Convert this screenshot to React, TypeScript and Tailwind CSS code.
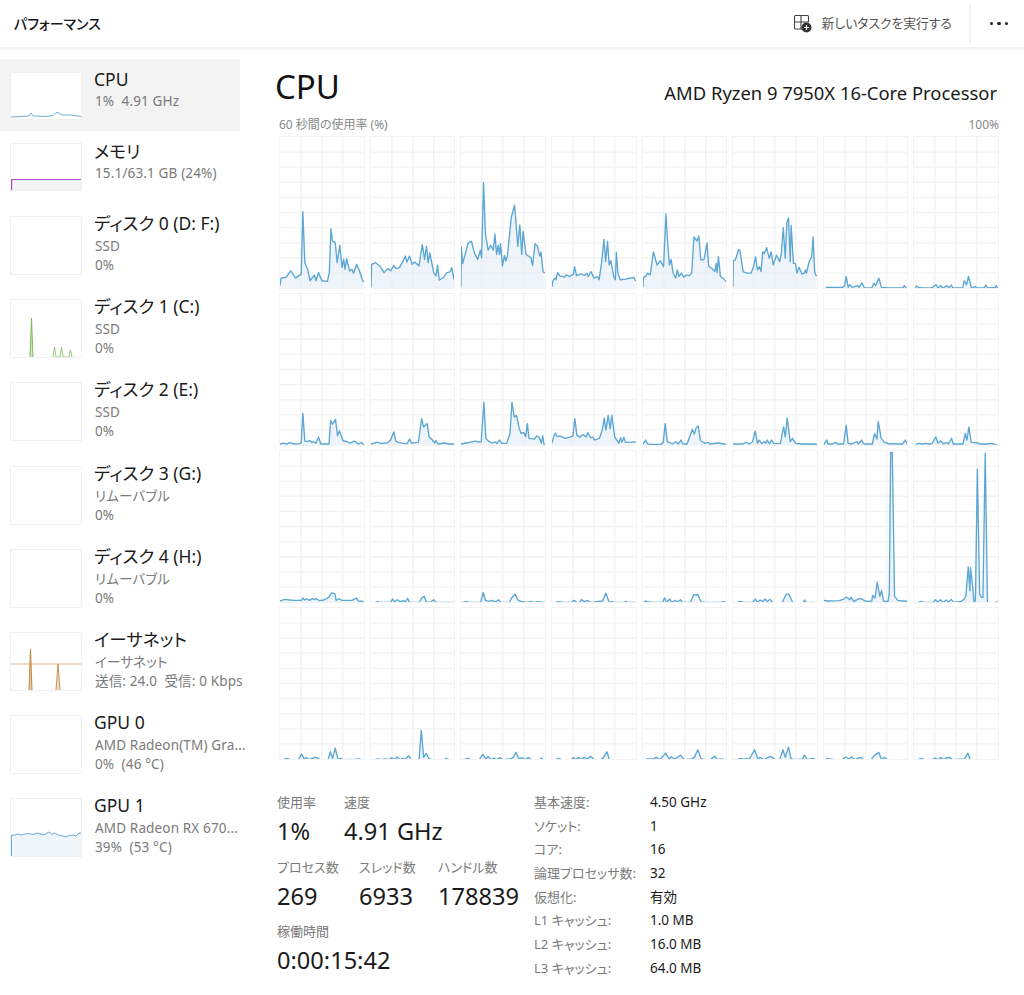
import React from "react";

const cores: string[] = [
  "0,7 3,30 18,32 33,52 48,30 65,43 70,232 76,77 85,55 92,22 105,40 110,22 118,47 128,22 145,20 151,47 156,180 161,142 169,139 175,77 183,130 190,62 195,87 199,57 204,89 213,52 220,57 225,45 235,72 245,47 253,22",
  "0,2 2,72 14,77 27,67 40,47 52,59 60,52 70,69 77,59 87,62 97,80 105,97 110,79 118,97 126,72 134,79 147,67 157,132 164,87 170,127 175,77 180,107 192,47 199,37 204,69 209,24 222,32 232,47 242,49 247,62 254,27",
  "0,2 1,125 5,74 14,107 22,137 32,142 41,107 51,87 59,115 63,92 69,320 75,162 83,115 91,130 99,115 104,164 109,102 114,130 118,102 121,135 127,67 133,99 137,82 142,97 154,215 164,252 174,127 180,192 186,102 190,172 199,102 214,92 219,69 227,135 234,127 241,97 245,109 251,50",
  "0,3 3,23 9,30 12,25 17,47 24,37 39,33 44,40 54,35 66,43 69,65 75,38 89,43 99,38 107,45 111,35 119,50 129,30 139,35 144,25 151,70 159,148 164,80 170,142 175,70 180,83 189,35 194,25 197,108 202,45 209,25 224,27 251,32 254,25",
  "0,3 1,32 8,35 13,45 22,40 32,110 43,70 53,83 63,65 70,225 76,130 81,70 86,87 92,45 100,30 105,55 110,35 117,45 125,33 133,40 141,37 149,45 156,155 165,143 171,158 177,85 187,87 196,137 201,67 210,60 220,50 224,75 227,47 231,95 237,35 245,30 254,20",
  "0,3 1,83 7,85 11,97 17,117 21,115 31,50 43,45 55,45 63,65 69,95 75,55 81,65 86,50 91,110 96,105 103,123 111,90 117,110 123,70 133,100 143,80 148,105 154,183 160,90 165,200 170,213 175,80 178,190 185,75 191,75 196,45 202,63 211,43 218,45 222,55 225,45 233,80 241,95 245,155 250,50 253,40",
  "6,5 56,5 63,10 68,38 74,5 79,13 86,5 103,10 107,5 116,18 124,3 146,3 153,18 158,10 168,33 176,5 201,3 221,3 241,3 246,10 251,3",
  "4,3 7,9 14,5 24,3 44,3 54,3 67,13 74,3 81,10 89,3 101,10 107,3 114,12 119,3 149,3 154,25 161,13 167,38 176,3 187,7 194,3 214,3 220,12 225,3 249,5 252,10 256,3",
  "0,3 10,6 20,3 30,7 45,3 60,4 65,7 70,96 76,12 84,10 92,14 98,7 104,10 110,5 118,24 125,3 150,3 155,75 161,63 170,78 176,28 182,43 193,13 205,10 215,6 228,12 240,3 250,8 254,2",
  "0,3 10,6 20,9 30,5 50,6 60,15 70,40 76,12 85,7 100,5 110,4 118,18 124,6 145,8 155,80 161,55 172,65 178,25 188,15 195,6 198,14 205,3 225,6 240,3 254,3",
  "0,3 15,6 30,9 45,12 55,9 62,10 70,130 76,20 84,12 95,6 105,9 110,5 118,15 125,5 140,5 150,35 156,130 163,85 170,90 178,52 184,35 192,38 198,25 203,65 208,20 225,18 232,28 240,22 246,5 250,28 254,3",
  "0,5 4,22 10,36 16,25 24,28 40,20 55,24 64,28 70,80 76,30 85,24 95,32 105,24 110,38 118,22 125,25 130,15 145,20 155,50 160,82 165,45 172,90 178,50 183,90 192,25 205,5 210,22 214,8 220,24 225,8 240,8 256,10",
  "0,3 8,15 14,3 25,2 55,2 62,8 68,65 74,10 80,8 90,3 100,10 108,3 116,15 122,3 135,3 151,48 157,33 163,53 169,58 176,13 190,5 200,8 205,3 230,6 250,3",
  "0,3 30,3 40,8 50,3 60,10 68,42 75,5 80,15 88,4 95,10 100,5 105,15 112,3 118,15 125,4 145,5 155,55 160,25 166,82 175,10 182,20 192,5 210,3 230,3 254,3",
  "0,2 8,15 12,3 25,3 36,8 42,3 60,3 68,60 74,5 85,3 100,10 105,3 115,15 122,3 148,3 155,35 162,18 166,72 175,20 185,8 200,3 215,4 225,3 240,3 249,15 254,5",
  "5,2 15,5 25,3 35,5 45,3 55,4 67,25 73,5 82,13 90,3 100,8 105,3 115,20 120,3 150,3 157,35 162,15 168,55 175,8 190,7 205,3 225,3 235,5 245,3",
  "0,3 5,5 15,8 30,6 45,5 65,5 70,12 75,6 82,10 90,5 100,10 106,7 112,10 120,4 135,6 150,15 158,28 168,25 172,5 180,10 190,5 205,5 220,5 234,12 240,3 254,2",
  "14,2 20,4 26,2 60,2 66,12 72,4 80,10 88,5 95,5 100,8 105,3 112,14 118,2 148,2 155,15 163,20 170,3 182,2 192,10 198,2 254,2",
  "5,2 15,4 28,2 60,2 68,32 75,8 85,5 95,8 105,3 115,10 122,2 148,2 155,15 165,27 175,8 185,5 200,2 215,4 225,2 235,4 254,2",
  "12,2 20,4 35,2 60,2 68,8 75,2 85,2 90,10 100,4 110,8 115,3 125,2 135,4 155,6 165,30 175,2 185,4 190,2 220,2 225,5 230,2 254,2",
  "4,2 8,6 15,3 30,2 60,2 66,15 72,3 82,12 88,3 100,8 105,3 115,10 120,2 145,2 155,25 168,25 178,3 190,2 240,2 245,4 254,2",
  "13,2 21,5 33,2 61,2 68,12 75,2 83,9 91,4 98,12 105,4 113,11 123,1 151,2 163,27 171,27 183,1 215,1 219,9 225,1 248,2",
  "0,5 11,3 46,4 61,9 69,15 79,7 83,15 91,1 101,7 109,11 119,7 129,2 146,3 149,20 156,12 163,60 171,17 176,35 183,2 196,2 200,27 204,455 209,455 216,17 226,5 241,3 251,3",
  "14,2 21,5 29,2 59,2 66,10 73,3 81,10 89,2 99,9 106,3 114,11 121,2 144,5 154,12 159,22 166,110 171,37 173,107 179,57 184,0 188,7 194,407 201,27 207,17 211,17 218,455 225,0 249,1 255,3",
  "11,2 21,5 32,1 56,1 66,18 74,3 81,8 88,1 101,6 108,8 115,6 122,1 147,1 154,25 161,5 169,36 178,1 186,5 193,1 217,2 224,1 242,3 249,1",
  "14,1 21,3 32,1 43,3 56,1 63,7 71,1 80,9 88,1 98,5 105,1 115,13 123,1 147,2 154,90 161,8 169,20 178,3 189,1 224,1 231,5 238,1",
  "10,1 20,5 31,1 56,1 67,17 76,3 83,11 91,1 101,6 108,1 119,7 129,1 150,3 160,8 168,23 178,3 188,7 196,1 206,7 216,1 241,1 246,5 252,1",
  "10,1 20,5 31,1 59,1 66,8 73,1 80,8 90,1 98,8 108,3 118,11 129,1 150,1 157,7 168,25 176,1",
  "10,3 31,3 40,8 52,1 69,21 80,3 87,10 97,3 105,8 115,15 126,1 150,3 157,8 168,31 178,3 192,1 206,1 220,12 227,1 238,3 248,2",
  "14,2 24,5 34,2 41,5 49,1 66,31 76,3 83,8 94,1 108,8 116,11 129,1 143,1 153,31 160,8 170,39 178,3 192,1 213,3 218,15 227,1 245,5 251,1",
  "6,5 18,3 32,1 56,1 67,9 77,3 84,9 95,1 105,6 113,8 120,1 144,1 155,15 168,23 176,1 186,8 193,1",
  "14,2 22,5 32,1 56,1 64,6 74,1 81,8 91,1 98,6 109,8 118,1 154,3 165,21 172,1",
];

const sunk = new Set([6, 7, 17, 18, 19, 20, 21, 23, 24, 25, 26, 27, 28, 29, 30, 31]);

function Core({ data, index }: { data: string; index: number }) {
  const W = 256;
  const H = 459;
  const drop = sunk.has(index) ? 3 : 0;
  const pts = data.split(" ").map((p) => {
    const [x, v] = p.split(",").map(Number);
    return [x, H - v + drop] as [number, number];
  });
  const last = pts[pts.length - 1];
  if (last[0] < W) pts.push([W, index < 16 ? last[1] + 4 : H + 4]);
  const line = pts.map((p) => p.join(",")).join(" ");
  const area = `${pts[0][0]},${H} ${line} ${W},${H}`;
  const hs = [1, 2, 3, 4, 5, 6, 7, 8, 9];
  const vs = [1, 2, 3];
  return (
    <div className="h-[153px] border border-[#f3f3f3] bg-white">
      <svg viewBox={`0 0 ${W} ${H}`} preserveAspectRatio="none" className="block h-full w-full overflow-hidden">
        {hs.map((i) => (
          <line key={i} x1={0} x2={W} y1={(H * i) / 10} y2={(H * i) / 10} stroke="#f3f3f3" strokeWidth={1.4} vectorEffect="non-scaling-stroke" />
        ))}
        {vs.map((i) => (
          <line key={i} x1={(W * i) / 4} x2={(W * i) / 4} y1={0} y2={H} stroke="#f1f2f3" strokeWidth={1.4} vectorEffect="non-scaling-stroke" />
        ))}
        <polygon points={area} fill="#e4edf6" fillOpacity={0.6} />
        <polyline points={line} fill="none" stroke="#4a9dce" strokeOpacity={0.9} strokeWidth={1.35} strokeLinejoin="round" vectorEffect="non-scaling-stroke" />
      </svg>
    </div>
  );
}

function Thumb({ tall, up, children }: { tall: boolean; up: boolean; children?: React.ReactNode }) {
  return (
    <div className={`w-[72px] shrink-0 border border-[#f0f0f0] bg-white ${up ? "mt-[4px]" : "mt-[5px]"} ${tall ? "h-[59px]" : "h-[48px]"}`}>
      {children}
    </div>
  );
}

const svgCls = "block h-full w-full";

function CpuThumb() {
  const p = "0,44 10,43.5 18,43 20,40 22,43 35,43.5 42,42.5 45,39.5 48,40 51,42 60,42 70,43.5";
  return (
    <svg viewBox="0 0 70 46" className={svgCls}>
      <polyline points={p} fill="none" stroke="#5aa5d2" strokeWidth={0.9} />
    </svg>
  );
}

function MemThumb() {
  return (
    <svg viewBox="0 0 70 46" className={svgCls}>
      <rect x={0} y={35} width={70} height={11} fill="#f3f3f3" />
      <polyline points="0.6,46 0.6,35.5 70,35.5" fill="none" stroke="#a94fd0" strokeWidth={1.2} />
    </svg>
  );
}

function DiskThumb() {
  return (
    <svg viewBox="0 0 70 57" className={svgCls}>
      <polygon points="19,57 20.5,18 22,57" fill="#cfe6bd" />
      <polyline points="19,57 20.5,18 22,57" fill="none" stroke="#72b44f" strokeWidth={0.9} />
      <polyline points="42,57 43.5,47 45,57 49,57 50.5,47 52,57 58,57 59.5,50 61,57" fill="none" stroke="#8cc36e" strokeWidth={0.9} />
    </svg>
  );
}

function NetThumb() {
  return (
    <svg viewBox="0 0 70 57" className={svgCls}>
      <rect x={0} y={30} width={70} height={2} fill="#ecd9c6" />
      <polygon points="18,57 19.5,16 21,57" fill="#eccfae" />
      <polyline points="18,57 19.5,16 21,57" fill="none" stroke="#b8792f" strokeWidth={0.9} />
      <polygon points="45,57 47,31 49,57" fill="#f2dfc9" />
      <polyline points="45,57 47,31 49,57" fill="none" stroke="#c48a45" strokeWidth={0.9} />
    </svg>
  );
}

function GpuThumb() {
  const p =
    "0.5,57 0.5,36 4,36 7,35 10,36 14,35 18,34.5 22,35.5 26,34 30,35 33,36 36,34 38,33 41,35.5 44,34 47,36 52,37 55,38 58,36.5 62,36 65,37 68,34 70,34";
  return (
    <svg viewBox="0 0 70 57" className={svgCls}>
      <polygon points={`${p} 70,57`} fill="#eef5fb" />
      <polyline points={p} fill="none" stroke="#5aa5d2" strokeWidth={0.9} />
    </svg>
  );
}

type Item = { name: string; lines: string[]; thumb?: React.ReactNode; active?: boolean };

const items: Item[] = [
  { name: "CPU", lines: ["1%  4.91 GHz"], thumb: <CpuThumb />, active: true },
  { name: "メモリ", lines: ["15.1/63.1 GB (24%)"], thumb: <MemThumb /> },
  { name: "ディスク 0 (D: F:)", lines: ["SSD", "0%"] },
  { name: "ディスク 1 (C:)", lines: ["SSD", "0%"], thumb: <DiskThumb /> },
  { name: "ディスク 2 (E:)", lines: ["SSD", "0%"] },
  { name: "ディスク 3 (G:)", lines: ["リムーバブル", "0%"] },
  { name: "ディスク 4 (H:)", lines: ["リムーバブル", "0%"] },
  { name: "イーサネット", lines: ["イーサネット", "送信: 24.0  受信: 0 Kbps"], thumb: <NetThumb /> },
  { name: "GPU 0", lines: ["AMD Radeon(TM) Gra...", "0%  (46 °C)"] },
  { name: "GPU 1", lines: ["AMD Radeon RX 670...", "39%  (53 °C)"], thumb: <GpuThumb /> },
];

function SideItem({ item }: { item: Item }) {
  const tall = item.lines.length > 1;
  return (
    <div className={`flex items-start pl-[10px] pt-[8px] ${tall ? "h-[83.2px]" : "h-[72px]"} ${item.active ? "bg-[#f3f3f3]" : ""}`}>
      <Thumb tall={tall} up={item.name === "メモリ"}>{item.thumb}</Thumb>
      <div className="ml-[12px]">
        <div className="h-[24px] whitespace-nowrap text-[17.5px] leading-[24px] text-[#1a1a1a]">{item.name}</div>
        {item.lines.map((l) => (
          <div key={l} className={`h-[16px] whitespace-pre pl-[1px] text-[13.5px] leading-[16px] tracking-[0.15px] text-[#7a7a7a] ${tall ? "mt-[3px]" : "mt-[2px]"}`}>
            {l}
          </div>
        ))}
      </div>
    </div>
  );
}

function Stat({ label, value, w }: { label: string; value: string; w: string }) {
  return (
    <div className={w}>
      <div className="h-[16px] text-[13px] leading-[16px] text-[#7a7a7a]">{label}</div>
      <div className="mt-[5px] h-[32px] whitespace-nowrap text-[23.6px] leading-[32px] text-[#1a1a1a]">{value}</div>
    </div>
  );
}

const specs: [string, string][] = [
  ["基本速度:", "4.50 GHz"],
  ["ソケット:", "1"],
  ["コア:", "16"],
  ["論理プロセッサ数:", "32"],
  ["仮想化:", "有効"],
  ["L1 キャッシュ:", "1.0 MB"],
  ["L2 キャッシュ:", "16.0 MB"],
  ["L3 キャッシュ:", "64.0 MB"],
];

export default function App() {
  return (
    <div className="h-[995px] w-[1024px] overflow-hidden bg-white font-['Noto_Sans','Noto_Sans_CJK_JP',sans-serif] [font-feature-settings:'palt']">
      <header className="flex h-[50px] items-center border-b-[3px] border-[#f3f3f3] pl-[14px]">
        <div className="text-[14px] font-medium text-[#1a1a1a]">パフォーマンス</div>
        <div className="ml-auto flex h-full items-center">
          <svg width="19" height="19" viewBox="0 0 19 19" fill="none" className="mr-[10px]">
            <path d="M9 15H2.5a1 1 0 0 1-1-1V2.500a1 1 0 0 1 1-1h12a1 1 0 0 1 1 1V8M1.500 8h14M8 1.500V15" stroke="#444" strokeWidth="1.1" />
            <circle cx="13.500" cy="13.500" r="5" fill="#333" />
            <path d="M13.500 11v5M11 13.500h5" stroke="#fff" strokeWidth="1.1" />
          </svg>
          <div className="w-[147px] text-[12.8px] text-[#555]">新しいタスクを実行する</div>
          <div className="h-[38px] w-[2px] bg-[#f3f3f3]" />
          <div className="ml-[19px] mr-[16px] flex gap-[4px]">
            <span className="h-[3.500px] w-[3.500px] rounded-full bg-[#222]" />
            <span className="h-[3.500px] w-[3.500px] rounded-full bg-[#222]" />
            <span className="h-[3.500px] w-[3.500px] rounded-full bg-[#222]" />
          </div>
        </div>
      </header>
      <div className="flex">
        <aside className="mt-[9px] w-[240px] shrink-0">
          {items.map((it) => (
            <SideItem key={it.name} item={it} />
          ))}
        </aside>
        <main className="ml-[35px] w-[724px]">
          <div className="flex h-[63px] items-end justify-between pr-[2px]">
            <h1 className="text-[33px] leading-[52px] text-[#111]">CPU</h1>
            <div className="mb-[6px] text-[18.4px] leading-[28px] text-[#1a1a1a]">AMD Ryzen 9 7950X 16-Core Processor</div>
          </div>
          <div className="flex h-[23px] items-center justify-between pl-[4px] text-[12px] text-[#8a8a8a]">
            <span>60 秒間の使用率 (%)</span>
            <span>100%</span>
          </div>
          <div className="ml-[4px] grid w-[720px] grid-cols-8 gap-x-[5px] gap-y-[4px]">
            {cores.map((c, i) => (
              <Core key={i} data={c} index={i} />
            ))}
          </div>
          <div className="mt-[34px] flex pl-[2px]">
            <div className="w-[257px] shrink-0">
              <div className="flex h-[65px]">
                <Stat label="使用率" value="1%" w="w-[67px]" />
                <Stat label="速度" value="4.91 GHz" w="w-[150px]" />
              </div>
              <div className="flex h-[64px]">
                <Stat label="プロセス数" value="269" w="w-[82px]" />
                <Stat label="スレッド数" value="6933" w="w-[79px]" />
                <Stat label="ハンドル数" value="178839" w="w-[90px]" />
              </div>
              <Stat label="稼働時間" value="0:00:15:42" w="w-[150px]" />
            </div>
            <div className="grid grid-cols-[116px_auto] auto-rows-[23.7px] text-[13px] leading-[16px]">
              {specs.map(([k, v]) => (
                <React.Fragment key={k}>
                  <div className="text-[#7a7a7a]">{k}</div>
                  <div className="text-[13.5px] text-[#1a1a1a]">{v}</div>
                </React.Fragment>
              ))}
            </div>
          </div>
        </main>
      </div>
    </div>
  );
}
